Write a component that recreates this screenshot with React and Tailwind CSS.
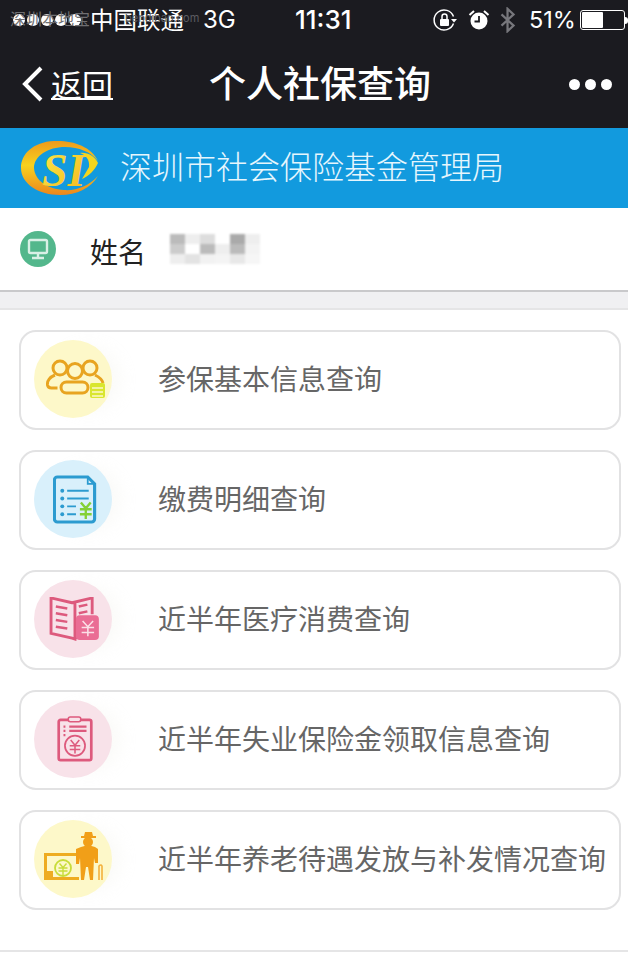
// 个人社保查询 — 深圳社保 menu page
const CJK = { fontFamily: '"Noto Sans CJK SC", "Liberation Sans", sans-serif' };
const LATIN = { fontFamily: "Inter, sans-serif" };

function Signal() {
  return (
    <div className="flex gap-[2px]">
      {[0, 1, 2, 3, 4].map((i) => (
        <span key={i} className="w-[12px] h-[12px] rounded-full bg-white" />
      ))}
    </div>
  );
}

function RotationLock() {
  return (
    <svg width="24" height="24" viewBox="0 0 24 24" fill="none" stroke="#fff">
      <path d="M20.500 8.500A10 10 0 1 0 20.500 15.500" strokeWidth="1.500" />
      <path d="M18 11h6l-3 3.500z" fill="#fff" stroke="none" />
      <rect x="7" y="11" width="9" height="7" rx="1" fill="#fff" stroke="none" />
      <path d="M9 11V8.500a2.500 2.500 0 0 1 5 0V11" strokeWidth="1.500" />
    </svg>
  );
}

function Alarm() {
  return (
    <svg width="22" height="22" viewBox="0 0 22 22">
      <circle cx="11" cy="12" r="8.500" fill="#fff" />
      <path d="M11 7v5.500H6.500" fill="none" stroke="#1b1b20" strokeWidth="1.800" />
      <path d="M1.500 6 6 2M20.500 6 16 2" stroke="#fff" strokeWidth="2" />
    </svg>
  );
}

function Bluetooth() {
  return (
    <svg width="18" height="26" viewBox="0 0 18 28" fill="none" stroke="#77777c" strokeWidth="2.400">
      <path d="M2 8l13 12-6.500 6V2L15 8 2 20" />
    </svg>
  );
}

function Battery() {
  return (
    <div className="flex items-center">
      <div className="w-[45px] h-[20px] rounded-[3px] border border-white p-[1px]">
        <div className="w-[21px] h-full bg-white rounded-[1px]" />
      </div>
      <div className="w-[3px] h-[7px] bg-white rounded-r-sm" />
    </div>
  );
}

function Logo() {
  return (
    <svg width="80" height="58" viewBox="0 0 80 58">
      <defs>
        <linearGradient id="ring" x1="0" y1="0" x2="0" y2="1">
          <stop offset="0" stopColor="#ee9a1c" />
          <stop offset="0.45" stopColor="#f7d21e" />
          <stop offset="1" stopColor="#ec861d" />
        </linearGradient>
        <linearGradient id="si" x1="0" y1="0" x2="1" y2="1">
          <stop offset="0" stopColor="#fbe94a" />
          <stop offset="1" stopColor="#f4b51c" />
        </linearGradient>
      </defs>
      <path d="M78 22C71 7 52 1 34 2 13 3 1 15 1 29c0 16 18 27 39 27 17 0 31-7 38-19-9 10-22 15-34 14C28 50 15 42 14 29 14 17 28 8 45 8c14 0 26 5 33 14z" fill="url(#ring)" />
      <text x="22" y="47" fontSize="46" fontWeight="700" fontStyle="italic" fill="url(#si)" fontFamily="Liberation Serif, serif">SI</text>
      <path d="M78 24c-3-7-11-11-18-10 6 2 10 7 9 14l-7 12c7-3 13-9 16-16z" fill="#f5d51e" />
    </svg>
  );
}

function PeopleIcon() {
  return (
    <svg width="60" height="40" viewBox="0 0 60 40" fill="none" stroke="#e8a420" strokeWidth="3">
      <circle cx="14" cy="9" r="7" />
      <path d="M9 16C4 18 1 22 1.500 26c.3 2 2 3 4 3h6" />
      <circle cx="44" cy="9" r="7" />
      <path d="M49 16c4 2 7 4 8 8" />
      <circle cx="29" cy="12" r="7.500" />
      <rect x="15" y="23" width="27" height="11" rx="5.500" fill="#fdf8c9" />
      <rect x="44" y="24" width="15" height="15" rx="2" fill="#d9e62e" stroke="none" />
      <path d="M46 29h11M46 33h11M46 37h11" stroke="#fdf8c9" strokeWidth="1.300" />
    </svg>
  );
}

function BillIcon() {
  return (
    <svg width="44" height="49" viewBox="0 0 44 50" fill="none">
      <path d="M4 2h31l7 7v36a3 3 0 0 1-3 3H4a3 3 0 0 1-3-3V5a3 3 0 0 1 3-3z" stroke="#2c9bd0" strokeWidth="3.200" />
      <path d="M35 2v7h7" stroke="#2c9bd0" strokeWidth="1.800" />
      <g fill="#2c9bd0">
        <circle cx="9" cy="16" r="2" />
        <circle cx="9" cy="24" r="2" />
        <circle cx="9" cy="32" r="2" />
        <circle cx="9" cy="40" r="2" />
      </g>
      <path d="M14 16h22M14 24h22M14 32h9M14 40h9" stroke="#2c9bd0" strokeWidth="2" />
      <path d="M28 28l5 6 5-6M27 35h12M27 40h12M33 34v11" stroke="#84d036" strokeWidth="2.400" />
    </svg>
  );
}

function BookIcon() {
  return (
    <svg width="52" height="44" viewBox="0 0 52 46" fill="none" stroke="#dd5a7d" strokeWidth="3">
      <path d="M24 6 2 1v37l22 5 3 1V6zM24 6l21-5v17M27 43l4-1" />
      <path d="M7 10l12 2M7 17l12 2M7 24l12 2M7 31l12 2M31 10l9-2M31 17l9-2" strokeWidth="2.600" />
      <rect x="28" y="19" width="24" height="26" rx="4" fill="#ea6d94" stroke="none" />
      <path d="M35 25l5.500 6 5.500-6M34 32h13M34 37h13M40.500 31v10" stroke="#fbe0e7" strokeWidth="1.600" />
    </svg>
  );
}

function ClipboardIcon() {
  return (
    <svg width="38" height="46" viewBox="0 0 38 48" fill="none" stroke="#dd5a7d" strokeWidth="2.800">
      <rect x="2" y="4" width="34" height="42" rx="2" />
      <rect x="12" y="1" width="13" height="5" rx="2" fill="#f8e2e9" strokeWidth="1.600" />
      <path d="M7 11h2M7 15.500h2M7 20h2M13 11h18M13 15.500h18" strokeWidth="2.400" />
      <circle cx="19" cy="31" r="10.500" strokeWidth="1.800" />
      <path d="M14.500 25l4.500 5.500 4.500-5.500M13.500 31h11M13.500 35h11M19 30.500V39" strokeWidth="1.600" />
    </svg>
  );
}

function PensionIcon() {
  return (
    <svg width="60" height="48" viewBox="0 0 60 48">
      <path d="M36 22.500H2.500v24H36" fill="none" stroke="#eeac21" strokeWidth="3" />
      <rect x="1" y="39" width="9" height="9" fill="#eeac21" />
      <circle cx="20" cy="36" r="8" fill="#fdf8c9" stroke="#c8dc3a" strokeWidth="1.800" />
      <path d="M16.500 31.500l3.500 4 3.500-4M15.500 36h9M15.500 39h9M20 35.500V43" fill="none" stroke="#c8dc3a" strokeWidth="1.400" />
      <path d="M42 0h7l1 4h3v2H38V4h3z" fill="#f19f18" />
      <circle cx="45" cy="10" r="5" fill="#f19f18" />
      <path d="M38 15q7-3 14 0l3 2v14h-3l-1-5-1 22h-3l-2-13h-2l-2 13h-3l-1-22-1 6h-3V17z" fill="#f19f18" />
      <path d="M56 48V34q2-2 3 0v14" fill="none" stroke="#f3b13d" strokeWidth="1.600" />
    </svg>
  );
}

const items = [
  { label: "参保基本信息查询", bg: "bg-[#fdf8c9]", Icon: PeopleIcon, pos: "pl-[12px]" },
  { label: "缴费明细查询", bg: "bg-[#d9f0fb]", Icon: BillIcon, pos: "pl-[19px]" },
  { label: "近半年医疗消费查询", bg: "bg-[#f8e2e9]", Icon: BookIcon, pos: "pl-[14px]" },
  { label: "近半年失业保险金领取信息查询", bg: "bg-[#f8e2e9]", Icon: ClipboardIcon, pos: "pl-[22px]" },
  { label: "近半年养老待遇发放与补发情况查询", bg: "bg-[#fdf8c9]", Icon: PensionIcon, pos: "pl-[9px] pb-[6px]" },
];

// 打码色块
const mosaic = [
  "#bbb", "#eee", "#ddd", "#fff", "#aaa", "#eee",
  "#ccc", "#fff", "#bbb", "#eee", "#bbb", "#f3f3f3",
  "#eee", "#e3e3e3", "#f2f2f2", "#f4f4f4", "#e8e8e8", "#f6f6f6",
];

export default function App() {
  return (
    <div className="w-[628px] h-[959px] bg-white overflow-hidden" style={CJK}>
      <div className="bg-[#1b1b20] h-[128px] text-white relative">
        <div className="h-[40px] flex items-center pl-[13px]">
          <Signal />
          <span className="ml-[9px] w-[96px] text-[23.500px] leading-none">中国联通</span>
          <span className="ml-[17px] w-[92px] text-[24px] leading-none" style={LATIN}>3G</span>
          <span className="w-[58px] text-[26px] font-medium leading-none whitespace-nowrap" style={LATIN}>11:31</span>
          <span className="ml-[80px] flex items-center"><RotationLock /></span>
          <span className="ml-[11px] flex items-center"><Alarm /></span>
          <span className="ml-[9px] flex items-center"><Bluetooth /></span>
          <span className="ml-[12px] w-[46px] text-[23.500px] leading-none whitespace-nowrap" style={LATIN}>51%</span>
          <span className="ml-[5px] flex"><Battery /></span>
        </div>
        <div className="absolute left-[10px] top-[9px] text-[16px] leading-[18px] text-[#6f6f72]">深圳本地宝</div>
        <div className="absolute left-[125px] top-[9px] text-[11px] leading-[18px] text-[#5c5c60]" style={LATIN}>bendibao.com</div>
        <div className="h-[88px] flex items-center relative">
          <svg className="ml-[22px]" width="22" height="36" viewBox="0 0 22 36" fill="none" stroke="#fff" strokeWidth="4">
            <path d="M19 2 3 18l16 16" />
          </svg>
          <span className="ml-[7px] text-[31px] leading-[38px] underline underline-offset-[1px] decoration-[2px]">返回</span>
          <div className="absolute left-[12px] right-0 pb-[3px] text-center text-[37px] leading-none font-medium">个人社保查询</div>
          <div className="absolute right-[16px] flex gap-[5px]">
            <span className="w-[11px] h-[11px] rounded-full bg-white" />
            <span className="w-[11px] h-[11px] rounded-full bg-white" />
            <span className="w-[11px] h-[11px] rounded-full bg-white" />
          </div>
        </div>
      </div>

      <div className="h-[80px] bg-[#129ade] flex items-center pl-[20px]">
        <Logo />
        <span className="ml-[20px] pb-[6px] text-[32px] leading-none font-light text-[#e6f6fd]">深圳市社会保险基金管理局</span>
      </div>

      <div className="h-[82px] flex items-center pl-[20px]">
        <div className="w-[36px] h-[36px] rounded-full bg-[#53b78c] flex items-center justify-center">
          <svg width="24" height="22" viewBox="0 0 24 22" fill="none" stroke="#d9f0e6" strokeWidth="2.400">
            <rect x="3" y="2" width="18" height="13" rx="1.500" />
            <path d="M12 15v4M6 20h12" />
          </svg>
        </div>
        <span className="ml-[34px] pt-[3px] text-[28px] leading-none text-[#222]">姓名</span>
        <div className="ml-[24px] grid grid-cols-6 w-[90px] h-[30px] blur-[1px]">
          {mosaic.map((c, i) => (
            <span key={i} style={{ background: c }} />
          ))}
        </div>
      </div>

      <div className="h-[20px] bg-[#f0f0f2] border-t-2 border-t-[#c9c9cb] border-b-2 border-b-[#e5e5e6]" />

      <div className="px-[19px] pt-[20px] flex flex-col gap-[20px]">
        {items.map(({ label, bg, Icon, pos }) => (
          <div key={label} className="h-[100px] w-[602px] rounded-[17px] border-2 border-[#e2e2e3] flex items-center pl-[13px] pb-[2px]">
            <div className="relative w-[78px] h-[78px] shrink-0">
              <div className={`w-[78px] h-[78px] rounded-full shadow-[16px_0_14px_-6px_rgba(238,238,232,0.25)] ${bg}`} />
              <div className={`absolute inset-0 flex items-center ${pos}`}>
                <Icon />
              </div>
            </div>
            <span className="ml-[46px] pb-[2px] text-[28px] leading-none whitespace-nowrap text-[#666]">{label}</span>
          </div>
        ))}
      </div>

      <div className="mt-[40px] border-t-2 border-[#e5e5e6]" />
    </div>
  );
}
